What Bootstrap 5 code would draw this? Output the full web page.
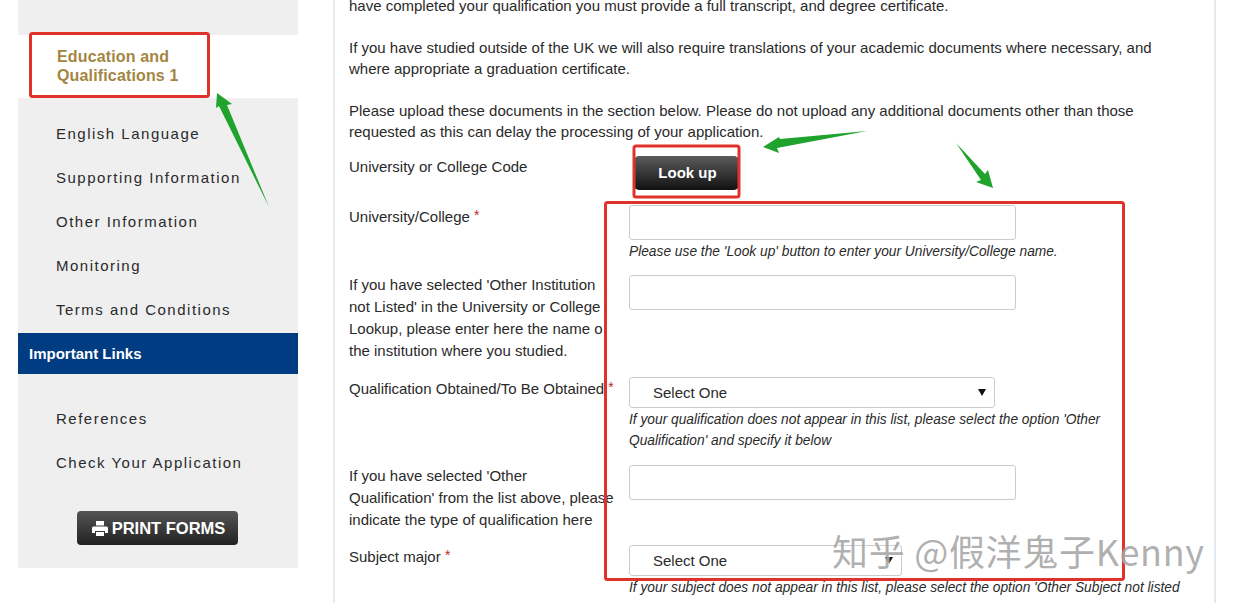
<!DOCTYPE html>
<html lang="en"><head><meta charset="utf-8"><title>Application</title>
<link rel="stylesheet" href="https://cdn.jsdelivr.net/npm/bootstrap@5.3.0/dist/css/bootstrap.min.css">
<style>
html,body{height:603px;overflow:hidden;background:#fff}
body{font-family:"Liberation Sans",Arial,sans-serif;font-size:15px;color:#2a2a2a;position:relative}
.page-wrap{padding-left:18px;height:603px;overflow:hidden}
.side-panel{width:280px;height:568px;background:#efeff0;padding-top:35px;flex:none}
.side-active{background:#fff;height:63px;padding:12px 0 0 39px;color:#a3863f;font-weight:700;font-size:16px;letter-spacing:.15px;line-height:19px;margin-bottom:14px}
.side-link{height:44px;line-height:44px;padding-left:38px;font-size:15px;letter-spacing:1.5px;color:#2a2a2a;display:block;text-decoration:none}
.side-band{background:#003c82;color:#fff;font-weight:700;font-size:15px;height:41px;line-height:42px;padding-left:11px;margin:1px 0 23px}
.print-btn{width:161px;height:34px;margin:26px 0 0 59px;padding-left:2px;background:linear-gradient(#555,#222);color:#fff;font-weight:700;font-size:16.5px;border-radius:4px;gap:4px}
.main-panel{margin-left:35px;width:883px;height:640px;margin-top:-5px;border-left:2px solid #e6ebf2;border-right:2px solid #e6ebf2;padding:0 0 0 14px;line-height:21px}
.main-panel p{margin:0 0 21px}
.form-line{display:grid;grid-template-columns:280px 1fr;line-height:22px}
.form-label-txt{white-space:nowrap}
.label-up{margin-top:-1px}
.req{color:#c4252c;vertical-align:2px;font-size:14px}
.txt-field{height:35px;width:387px;border:1px solid #ccc;border-radius:3px;display:block;background:#fff;padding:0}
.sel-wrap{position:relative;display:block;height:31px}
.sel-wrap::after{content:"";position:absolute;top:12px;border-left:4px solid transparent;border-right:4px solid transparent;border-top:7px solid #111}
.sel-one::after{left:349px}
.sel-two::after{left:256px}
.sel-field{height:31px;border:1px solid #ccc;border-radius:3px;background:#fff;font-family:inherit;font-size:15px;padding:0 0 0 23px;color:#2a2a2a;appearance:none;display:block}
.sel-one .sel-field{width:366px}
.sel-two .sel-field{width:273px}
.help-txt{font-style:italic;font-size:13.75px;line-height:21px;color:#2a2a2a;margin-top:1px}
.lookup-btn{width:105px;height:34px;margin-left:5px;padding-left:8px;background:linear-gradient(#5c5c5c,#111);color:#fff;font-weight:700;font-size:15px;border-radius:5px;border:0}
.gap-13{margin-top:13px}.gap-14{margin-top:14px}.gap-15{margin-top:15px}
.overlay-art{position:absolute;left:0;top:0;pointer-events:none}
.water-mark{position:absolute;left:832px;top:525px;font-size:36px;line-height:50px;color:rgba(150,150,150,.75);font-family:"Noto Sans CJK SC","Liberation Sans",sans-serif;white-space:nowrap;letter-spacing:.7px;text-shadow:1px 1px 0 rgba(255,255,255,.6)}
</style></head><body>
<div class="page-wrap d-flex">
<aside class="side-panel">
<div class="side-active">Education and<br>Qualifications 1</div>
<a class="side-link" href="#">English Language</a>
<a class="side-link" href="#">Supporting Information</a>
<a class="side-link" href="#">Other Information</a>
<a class="side-link" href="#">Monitoring</a>
<a class="side-link" href="#">Terms and Conditions</a>
<div class="side-band">Important Links</div>
<a class="side-link" href="#">References</a>
<a class="side-link" href="#">Check Your Application</a>
<div class="print-btn d-flex align-items-center justify-content-center">
<svg width="16" height="15" viewBox="0 0 16 15"><path fill="#fff" d="M4 0h8v4.500H4zM1.500 5.500h13q1.500 0 1.500 1.500v5h-3v-2H3v2H0V7q0-1.500 1.500-1.500zM4 11h8v4H4z"/></svg>
<span>PRINT FORMS</span></div>
</aside>
<main class="main-panel">
<p>have completed your qualification you must provide a full transcript, and degree certificate.</p>
<p>If you have studied outside of the UK we will also require translations of your academic documents where necessary, and<br>where appropriate a graduation certificate.</p>
<p class="mb-0">Please upload these documents in the section below. Please do not upload any additional documents other than those<br>requested as this can delay the processing of your application.</p>
<div class="form-line gap-14"><div class="form-label-txt">University or College Code</div><div><button class="lookup-btn" type="button">Look up</button></div></div>
<div class="form-line gap-15"><div class="form-label-txt label-up">University/College <span class="req">*</span></div><div><input class="txt-field" type="text" aria-label="University"><div class="help-txt">Please use the 'Look up' button to enter your University/College name.</div></div></div>
<div class="form-line gap-13"><div class="form-label-txt label-up">If you have selected 'Other Institution<br>not Listed' in the University or College<br>Lookup, please enter here the name o<br>the institution where you studied.</div><div><input class="txt-field" type="text" aria-label="Other institution"></div></div>
<div class="form-line gap-15"><div class="form-label-txt label-up">Qualification Obtained/To Be Obtained <span class="req">*</span></div><div><span class="sel-wrap sel-one"><select class="sel-field" aria-label="Qualification"><option>Select One</option></select></span><div class="help-txt">If your qualification does not appear in this list, please select the option 'Other<br>Qualification' and specify it below</div></div></div>
<div class="form-line gap-14"><div class="form-label-txt">If you have selected 'Other<br>Qualification' from the list above, please<br>indicate the type of qualification here</div><div><input class="txt-field" type="text" aria-label="Other qualification"></div></div>
<div class="form-line gap-14"><div class="form-label-txt label-up">Subject major <span class="req">*</span></div><div><span class="sel-wrap sel-two"><select class="sel-field" aria-label="Subject"><option>Select One</option></select></span><div class="help-txt">If your subject does not appear in this list, please select the option 'Other Subject not listed</div></div></div>
</main>
</div>
<svg class="overlay-art" width="1235" height="603" viewBox="0 0 1235 603">
<g fill="none" stroke="#e0322b" stroke-width="3"><rect x="30.500" y="33.500" width="178" height="63" rx="2"/><rect x="634" y="146" width="105" height="51" rx="2"/><rect x="605.500" y="202.500" width="518" height="377" rx="2"/></g>
<g fill="#1fa32c"><path d="M217 93 232 104 227 105 269 207 219 106 216 108z"/><path d="M763 147 779 137 780 139 867 131 777 148 779 153z"/><path d="M956 143 985 174 988 170 993 188 976 182 981 180z"/></g>
</svg>
<div class="water-mark">知乎 @假洋鬼子Kenny</div>
</body></html>
